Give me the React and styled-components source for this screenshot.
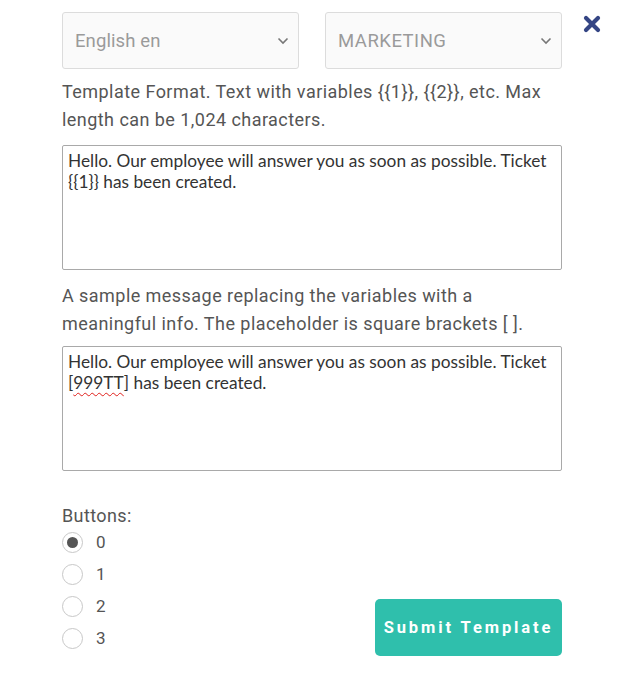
import React, { useState } from "react";
import styled, { createGlobalStyle } from "styled-components";

const GlobalResets = createGlobalStyle`
  * {
    box-sizing: border-box;
    margin: 0;
    padding: 0;
  }
  body {
    background: #fff;
    font-family: "Roboto", sans-serif;
  }
`;

const FORMAT_HINT =
  "Template Format. Text with variables {{1}}, {{2}}, etc. Max length can be 1,024 characters.";
const SAMPLE_HINT =
  "A sample message replacing the variables with a meaningful info. The placeholder is square brackets [ ].";
const SAMPLE_FORMAT =
  "Hello. Our employee will answer you as soon as possible. Ticket {{1}} has been created.";

function App() {
  const [buttons, setButtons] = useState(0);

  return (
    <Page>
      <GlobalResets />
      <Form>
        <SelectRow>
          <SelectWrap>
            <Select defaultValue="en">
              <option value="en">English en</option>
            </Select>
            <Chevron />
          </SelectWrap>
          <SelectWrap>
            <Select $caps defaultValue="marketing">
              <option value="marketing">MARKETING</option>
            </Select>
            <Chevron />
          </SelectWrap>
        </SelectRow>

        <Hint $top={9} $bottom={11}>
          {FORMAT_HINT}
        </Hint>
        <TextArea defaultValue={SAMPLE_FORMAT} spellCheck={false} />

        <Hint $top={12} $bottom={8}>
          {SAMPLE_HINT}
        </Hint>
        <MessageBox>
          Hello. Our employee will answer you as soon as possible. Ticket{" "}
          [<Misspelled>999TT</Misspelled>] has been created.
        </MessageBox>

        <Footer>
          <Options>
            <OptionsTitle>Buttons:</OptionsTitle>
            {[0, 1, 2, 3].map((n) => (
              <Option key={n} onClick={() => setButtons(n)}>
                <Radio $checked={buttons === n} />
                {n}
              </Option>
            ))}
          </Options>
          <Submit type="button">Submit Template</Submit>
        </Footer>
      </Form>

      <Close aria-label="close">
        <svg width="18" height="18" viewBox="0 0 18 18">
          <path
            d="M3 3 L15 15 M15 3 L3 15"
            stroke="#344584"
            strokeWidth="4.2"
            strokeLinecap="round"
          />
        </svg>
      </Close>
    </Page>
  );
}

function Chevron() {
  return (
    <ChevronIcon width="12" height="8" viewBox="0 0 12 8">
      <path
        d="M1.5 1.5 L6 6 L10.5 1.5"
        fill="none"
        stroke="#777"
        strokeWidth="1.6"
      />
    </ChevronIcon>
  );
}

const Page = styled.div`
  width: 622px;
  height: 676px;
  display: flex;
  padding: 12px 0 0 62px;
  position: relative;
`;

const Form = styled.div`
  width: 500px;
  display: flex;
  flex-direction: column;
`;

const SelectRow = styled.div`
  display: grid;
  grid-template-columns: 237px 237px;
  justify-content: space-between;
`;

const SelectWrap = styled.div`
  position: relative;
`;

const Select = styled.select`
  appearance: none;
  width: 100%;
  height: 57px;
  border: 1px solid #dcdcdc;
  border-radius: 3px;
  background: #fafafa;
  color: #9a9a9a;
  font-family: "Roboto", sans-serif;
  font-size: 18.5px;
  letter-spacing: ${(p) => (p.$caps ? "0.5px" : "0.1px")};
  padding: 0 12px;
  outline: none;
`;

const ChevronIcon = styled.svg`
  position: absolute;
  right: 10px;
  top: 25px;
  pointer-events: none;
`;

const Hint = styled.p`
  margin: ${(p) => p.$top}px 0 ${(p) => p.$bottom}px;
  font-family: "Roboto", sans-serif;
  font-size: 18px;
  line-height: 28px;
  color: #555;
  letter-spacing: 0.45px;
`;

const TextArea = styled.textarea`
  width: 500px;
  height: 125px;
  resize: none;
  border: 1px solid #a9a9a9;
  border-radius: 2px;
  padding: 4px 5px;
  font-family: "Lato", sans-serif;
  font-size: 17.3px;
  line-height: 21px;
  color: #333;
  outline: none;
`;

const MessageBox = styled.div`
  width: 500px;
  height: 125px;
  border: 1px solid #a9a9a9;
  border-radius: 2px;
  padding: 4px 5px;
  font-family: "Lato", sans-serif;
  font-size: 17.3px;
  line-height: 21px;
  color: #333;
`;

const Misspelled = styled.span`
  text-decoration: underline wavy #e0201c;
  text-decoration-thickness: 1px;
  text-underline-offset: 3px;
`;

const Footer = styled.div`
  margin-top: 35px;
  display: flex;
  justify-content: space-between;
  align-items: flex-end;
`;

const Options = styled.div`
  display: flex;
  flex-direction: column;
`;

const OptionsTitle = styled.div`
  font-family: "Roboto", sans-serif;
  font-size: 18px;
  line-height: 20px;
  color: #555;
  letter-spacing: 0.4px;
`;

const Option = styled.label`
  display: flex;
  align-items: center;
  gap: 13px;
  height: 32px;
  font-family: "Roboto", sans-serif;
  font-size: 17px;
  color: #555;
  cursor: pointer;
`;

const Radio = styled.span`
  width: 21px;
  height: 21px;
  border-radius: 50%;
  border: 1px solid #c8c8c8;
  background: #fff;
  display: flex;
  align-items: center;
  justify-content: center;

  &::after {
    content: "";
    width: 11px;
    height: 11px;
    border-radius: 50%;
    background: #555;
    display: ${(p) => (p.$checked ? "block" : "none")};
  }
`;

const Submit = styled.button`
  width: 187px;
  height: 57px;
  margin-bottom: -2px;
  border: none;
  border-radius: 5px;
  background: #2fbfac;
  color: #fff;
  font-family: "Roboto", sans-serif;
  font-weight: 700;
  font-size: 16.5px;
  letter-spacing: 2.9px;
  cursor: pointer;
`;

const Close = styled.button`
  position: absolute;
  top: 15px;
  left: 583px;
  border: none;
  background: none;
  cursor: pointer;
`;

export default App;
